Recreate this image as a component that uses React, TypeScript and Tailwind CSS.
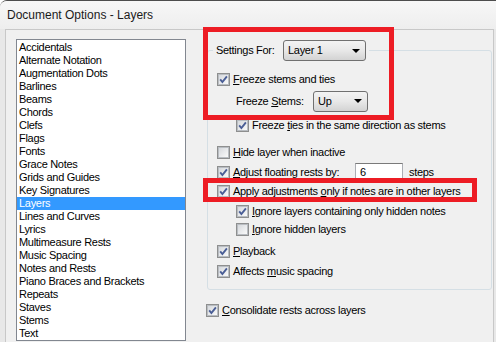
import type { ReactNode } from "react";

const topics = [
  "Accidentals",
  "Alternate Notation",
  "Augmentation Dots",
  "Barlines",
  "Beams",
  "Chords",
  "Clefs",
  "Flags",
  "Fonts",
  "Grace Notes",
  "Grids and Guides",
  "Key Signatures",
  "Layers",
  "Lines and Curves",
  "Lyrics",
  "Multimeasure Rests",
  "Music Spacing",
  "Notes and Rests",
  "Piano Braces and Brackets",
  "Repeats",
  "Staves",
  "Stems",
  "Text",
];

function Box({ checked }: { checked: boolean }) {
  return (
    <span className="flex h-[13px] w-[13px] shrink-0 items-center justify-center border border-[#8e8f8f] bg-white">
      <span className="relative flex h-[11px] w-[11px] items-center justify-center border border-[#b9bdc2] bg-gradient-to-br from-[#d6d9dd] to-[#fafafa]">
        {checked && (
          <svg width="11" height="11" viewBox="0 0 11 11" className="absolute -left-px -top-px">
            <path d="M2.2 5.4 L4.4 8 L8.9 2.4" fill="none" stroke="#4a5e96" strokeWidth="1.9" />
          </svg>
        )}
      </span>
    </span>
  );
}

function Check({
  checked,
  children,
  className,
}: {
  checked: boolean;
  children: ReactNode;
  className: string;
}) {
  return (
    <div className={`flex items-center ${className}`}>
      <Box checked={checked} />
      <span className="ml-[3px] whitespace-nowrap">{children}</span>
    </div>
  );
}

function Combo({ value, className }: { value: string; className: string }) {
  return (
    <div
      className={`flex items-center justify-between rounded-[3px] border border-[#707070] bg-gradient-to-b from-[#f3f3f3] via-[#e8e8e8] to-[#d3d3d3] pl-[4px] pr-[5px] ${className}`}
    >
      <span>{value}</span>
      <svg width="8" height="4" viewBox="0 0 8 4">
        <polygon points="0,0 8,0 4,4" fill="#000" />
      </svg>
    </div>
  );
}

export default function App() {
  return (
    <div className="relative flex h-[342px] w-[496px] flex-col overflow-hidden rounded-tl-[7px] border-t border-[#4d4d4d] bg-[#e8e8e8] text-[11px] tracking-[-0.3px] text-black [font-family:'Liberation_Sans',Arial,sans-serif]">
      {/* title bar */}
      <div className="flex h-[28px] shrink-0 items-center bg-gradient-to-b from-[#f7f7f7] to-[#eeeeee] pl-[7px] text-[12px] tracking-normal text-[#1b1b1b]">
        Document Options - Layers
      </div>

      {/* client area */}
      <div className="ml-[5px] mr-[2px] flex flex-1 border-l border-r border-t border-[#c8c8c8] bg-[#f0f0f0]">
        {/* topic list */}
        <div className="ml-[10px] mt-[9px] w-[170px] shrink-0 self-start border border-[#828790] bg-white pt-px">
          {topics.map((t) => (
            <div
              key={t}
              className={`flex h-[13px] items-center pl-[2px] leading-none ${
                t === "Layers" ? "bg-[#3399ff] text-white" : ""
              }`}
            >
              {t}
            </div>
          ))}
        </div>

        {/* settings */}
        <div className="ml-[21px] w-[285px] shrink-0">
          <div className="relative mt-[20px] rounded-[3px] border border-[#d5dfe5] pb-[9px] pl-[9px]">
            <div className="absolute -top-[11px] left-[5px] flex items-center bg-[#f0f0f0] px-[3px]">
              <span className="w-[67px]">Settings For:</span>
              <Combo value="Layer 1" className="h-[21px] w-[83px]" />
            </div>

            <Check checked className="mt-[18px] h-[20px]">
              <u>F</u>reeze stems and ties
            </Check>
            <div className="mt-px flex h-[22px] items-center pl-[19px]">
              <span className="w-[77px]">
                Freeze <u>S</u>tems:
              </span>
              <Combo value="Up" className="h-[21px] w-[55px]" />
            </div>
            <Check checked className="mt-[4px] h-[18px] pl-[19px]">
              Freeze <u>t</u>ies in the same direction as stems
            </Check>

            <Check checked={false} className="mt-[8px] h-[20px]">
              <u>H</u>ide layer when inactive
            </Check>
            <div className="flex h-[20px] items-center">
              <Box checked />
              <span className="ml-[3px] w-[122px]">
                <u>A</u>djust floating rests by:
              </span>
              <div className="flex h-[19px] w-[48px] items-center border border-[#abadb3] border-t-[#7a7a7a] bg-white pl-[4px]">
                6
              </div>
              <span className="ml-[6px]">steps</span>
            </div>
            <Check checked className="h-[18px]">
              Apply adjustments <u>o</u>nly if notes are in other layers
            </Check>
            <Check checked className="mt-[2px] h-[18px] pl-[19px]">
              <u>I</u>gnore layers containing only hidden notes
            </Check>
            <Check checked={false} className="h-[18px] pl-[19px]">
              <u>I</u>gnore hidden layers
            </Check>

            <Check checked className="mt-[4px] h-[18px]">
              <u>P</u>layback
            </Check>
            <Check checked className="mt-[2px] h-[18px]">
              Affects <u>m</u>usic spacing
            </Check>
          </div>

          <Check checked className="mt-[11px] h-[18px] -ml-px">
            <u>C</u>onsolidate rests across layers
          </Check>
        </div>
      </div>

      {/* annotation boxes */}
      <div className="pointer-events-none absolute left-[203px] top-[26px] h-[93px] w-[191px] border-[5px] border-[#ed1c24]" />
      <div className="pointer-events-none absolute left-[203px] top-[177px] h-[24px] w-[274px] border-[5px] border-[#ed1c24]" />
    </div>
  );
}
